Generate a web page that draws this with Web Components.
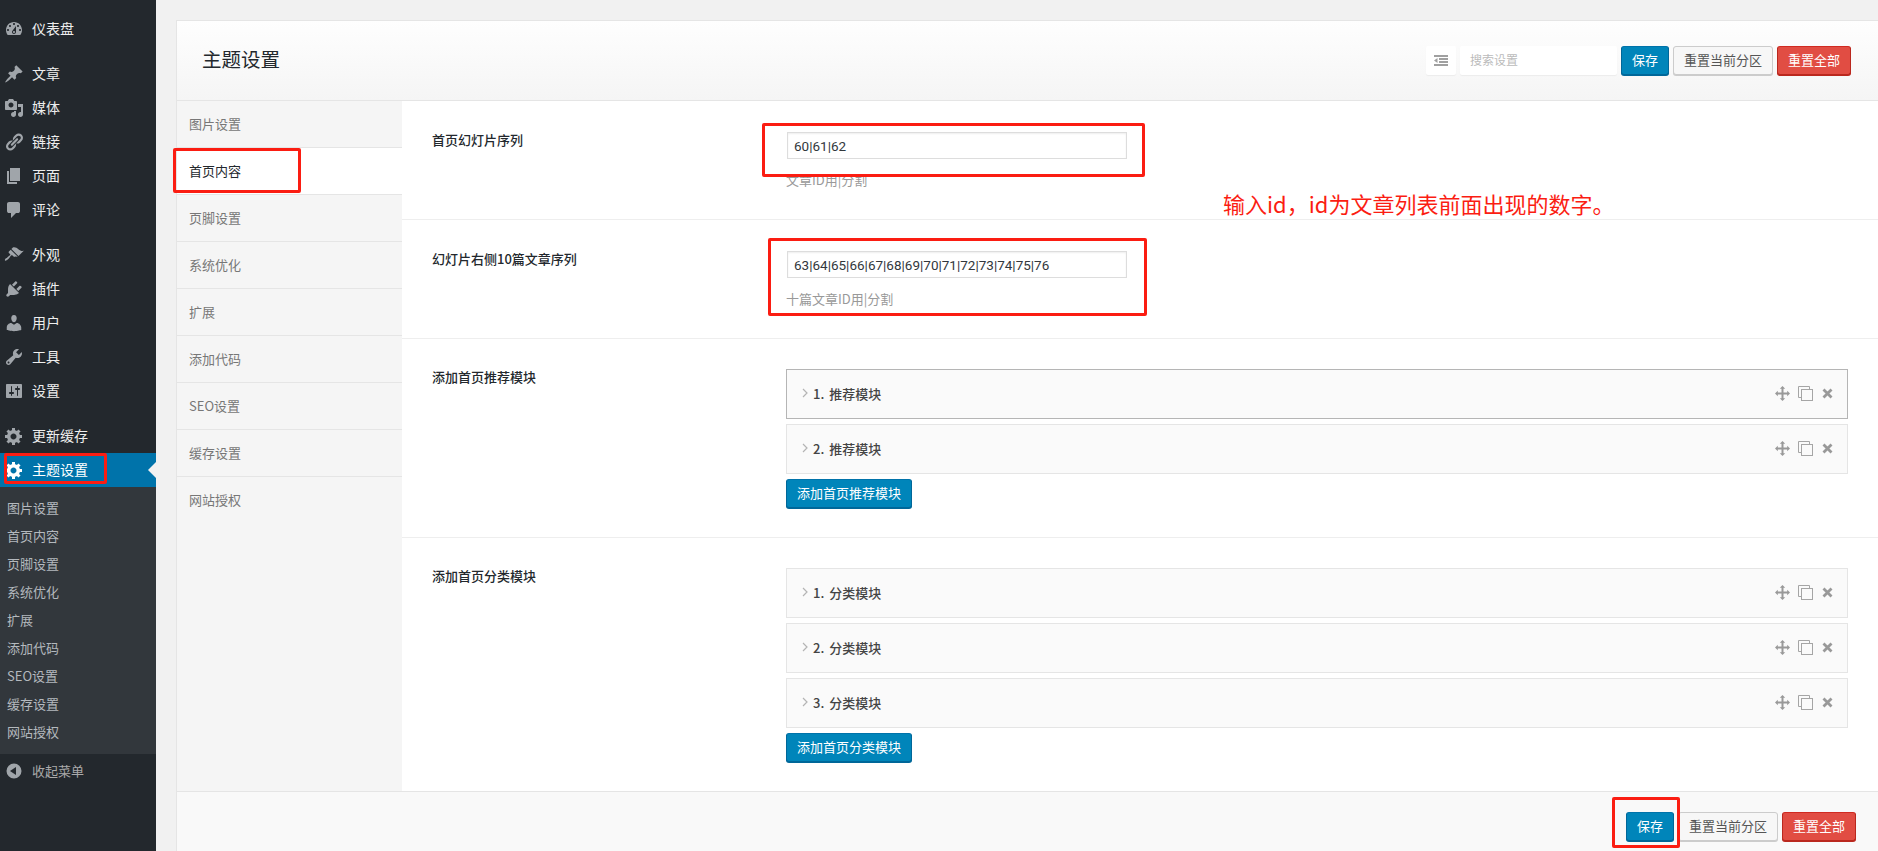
<!DOCTYPE html>
<html lang="zh-CN">
<head>
<meta charset="utf-8">
<title>主题设置</title>
<style>
  html, body { margin: 0; height: 851px; overflow: hidden; }
  body {
    position: relative;
    display: flex;
    background: #f1f1f1;
    font-family: "Noto Sans CJK SC", "Liberation Sans", sans-serif;
    font-size: 13px;
  }
</style>
</head>
<body>
  <wp-sidebar>
    <wp-menu-item icon="dashboard">仪表盘</wp-menu-item>
    <wp-menu-sep></wp-menu-sep>
    <wp-menu-item icon="pin">文章</wp-menu-item>
    <wp-menu-item icon="media">媒体</wp-menu-item>
    <wp-menu-item icon="links">链接</wp-menu-item>
    <wp-menu-item icon="page">页面</wp-menu-item>
    <wp-menu-item icon="comment">评论</wp-menu-item>
    <wp-menu-sep></wp-menu-sep>
    <wp-menu-item icon="brush">外观</wp-menu-item>
    <wp-menu-item icon="plugin">插件</wp-menu-item>
    <wp-menu-item icon="user">用户</wp-menu-item>
    <wp-menu-item icon="tools">工具</wp-menu-item>
    <wp-menu-item icon="sliders">设置</wp-menu-item>
    <wp-menu-sep></wp-menu-sep>
    <wp-menu-item icon="gear">更新缓存</wp-menu-item>
    <wp-menu-item icon="gear" current>主题设置</wp-menu-item>
    <wp-submenu>
      <span>图片设置</span><span>首页内容</span><span>页脚设置</span>
      <span>系统优化</span><span>扩展</span><span>添加代码</span>
      <span>SEO设置</span><span>缓存设置</span><span>网站授权</span>
    </wp-submenu>
    <wp-menu-item icon="collapse" dim>收起菜单</wp-menu-item>
  </wp-sidebar>

  <theme-panel>
    <panel-header slot="header" heading="主题设置"></panel-header>

    <panel-nav-item slot="nav">图片设置</panel-nav-item>
    <panel-nav-item slot="nav" active>首页内容</panel-nav-item>
    <panel-nav-item slot="nav">页脚设置</panel-nav-item>
    <panel-nav-item slot="nav">系统优化</panel-nav-item>
    <panel-nav-item slot="nav">扩展</panel-nav-item>
    <panel-nav-item slot="nav">添加代码</panel-nav-item>
    <panel-nav-item slot="nav">SEO设置</panel-nav-item>
    <panel-nav-item slot="nav">缓存设置</panel-nav-item>
    <panel-nav-item slot="nav" last>网站授权</panel-nav-item>

    <option-row label="首页幻灯片序列" style="--pad-bottom:32px">
      <text-field>60|61|62</text-field>
      <field-desc>文章ID用|分割</field-desc>
    </option-row>
    <option-row label="幻灯片右侧10篇文章序列" style="--pad-bottom:32px">
      <text-field>63|64|65|66|67|68|69|70|71|72|73|74|75|76</text-field>
      <field-desc>十篇文章ID用|分割</field-desc>
    </option-row>
    <option-row label="添加首页推荐模块" style="--pad-top:30px;--pad-bottom:29px">
      <repeater-row focused>1. 推荐模块</repeater-row>
      <repeater-row>2. 推荐模块</repeater-row>
      <ui-button kind="primary">添加首页推荐模块</ui-button>
    </option-row>
    <option-row label="添加首页分类模块" style="--pad-top:30px;--pad-bottom:0px" last>
      <repeater-row>1. 分类模块</repeater-row>
      <repeater-row>2. 分类模块</repeater-row>
      <repeater-row>3. 分类模块</repeater-row>
      <ui-button kind="primary">添加首页分类模块</ui-button>
    </option-row>

    <panel-footer slot="footer"></panel-footer>
  </theme-panel>

  <red-box x="4" y="453" w="103" h="31"></red-box>
  <red-box x="173" y="148" w="128" h="45"></red-box>
  <red-box x="762" y="123" w="383" h="54"></red-box>
  <red-box x="768" y="238" w="379" h="78"></red-box>
  <red-box x="1612" y="797" w="68" h="51"></red-box>
  <red-note x="1223" y="188">输入id，id为文章列表前面出现的数字。</red-note>

<script>
  const ICONS = {
    dashboard: 'M3.76 16h12.48c1.1-1.37 1.76-3.11 1.76-5 0-4.42-3.58-8-8-8s-8 3.58-8 8c0 1.89.66 3.63 1.76 5zM10 4c.55 0 1 .45 1 1s-.45 1-1 1-1-.45-1-1 .45-1 1-1zM6 6c.55 0 1 .45 1 1s-.45 1-1 1-1-.45-1-1 .45-1 1-1zm8 0c.55 0 1 .45 1 1s-.45 1-1 1-1-.45-1-1 .45-1 1-1zm-5.37 5.55L12 7v6c0 1.1-.9 2-2 2s-2-.9-2-2c0-.57.24-1.08.63-1.45zM4 10c.55 0 1 .45 1 1s-.45 1-1 1-1-.45-1-1 .45-1 1-1zm12 0c.55 0 1 .45 1 1s-.45 1-1 1-1-.45-1-1 .45-1 1-1zm-5 3c0-.55-.45-1-1-1s-1 .45-1 1 .45 1 1 1 1-.45 1-1z',
    pin: 'M10.44 3.02l1.82-1.82 6.36 6.35-1.83 1.82c-1.05-.68-2.48-.57-3.41.36l-.75.75c-.92.93-1.04 2.35-.35 3.41l-1.83 1.82-2.41-2.41-2.8 2.79c-.42.42-3.38 2.71-3.8 2.29s1.86-3.39 2.28-3.81l2.79-2.79L4.1 9.36l1.83-1.82c1.05.69 2.48.57 3.4-.36l.75-.75c.93-.92 1.05-2.35.36-3.41z',
    media: 'M13 11V4c0-.55-.45-1-1-1h-1.67L9 1H5L3.67 3H2c-.55 0-1 .45-1 1v7c0 .55.45 1 1 1h10c.55 0 1-.45 1-1zM7 4.5c1.38 0 2.5 1.12 2.5 2.5S8.38 9.5 7 9.5 4.5 8.38 4.5 7 5.62 4.5 7 4.5zM14 6h5v10.5c0 1.38-1.12 2.5-2.5 2.5S14 17.88 14 16.5s1.12-2.5 2.5-2.5c.17 0 .34.02.5.05V9h-3V6zm-4 8.05V13h2v3.5c0 1.38-1.12 2.5-2.5 2.5S7 17.88 7 16.5 8.12 14 9.5 14c.17 0 .34.02.5.05z',
    links: 'M17.74 2.76c1.68 1.69 1.68 4.41 0 6.1l-1.53 1.52c-1.12 1.12-2.7 1.47-4.14 1.09l2.62-2.61.76-.77.76-.76c.84-.84.84-2.2 0-3.04-.84-.85-2.2-.85-3.04 0l-.77.76-3.38 3.38c-.37-1.44-.02-3.02 1.1-4.14l1.52-1.53c1.69-1.68 4.42-1.68 6.1 0zM8.59 13.43l5.34-5.34c.42-.42.42-1.1 0-1.52-.44-.43-1.13-.39-1.53 0l-5.33 5.34c-.42.42-.42 1.1 0 1.52.44.43 1.13.39 1.52 0zm-.76 2.29l4.14-4.15c.38 1.44.03 3.02-1.09 4.14l-1.52 1.53c-1.69 1.68-4.41 1.68-6.1 0-1.68-1.68-1.68-4.42 0-6.1l1.53-1.52c1.12-1.12 2.7-1.47 4.14-1.1l-4.14 4.15c-.85.84-.85 2.2 0 3.05.84.84 2.2.84 3.04 0z',
    page: 'M6 15V2h10v13H6zm-1 1h8v2H3V5h2v11z',
    comment: 'M5 2h9q.82 0 1.41.59T16 4v7q0 .82-.59 1.41T14 13h-2l-5 5v-5H5q-.82 0-1.41-.59T3 11V4q0-.82.59-1.41T5 2z',
    brush: 'M14.48 11.06L7.41 3.99l1.5-1.5c.5-.56 2.3-.47 3.51.32 1.21.8 1.43 1.28 2.91 2.1 1.18.64 2.45 1.26 4.45.85zm-.71.71L6.7 4.7 4.93 6.47c-.39.39-.39 1.02 0 1.41l1.06 1.06c.39.39.39 1.03 0 1.42-.6.6-1.43 1.11-2.21 1.69-.35.26-.7.53-1.01.84C1.43 13.23.4 14.84 1.06 15.5c.65.65 2.26-.44 3.51-1.76.31-.31.58-.65.84-1.01.58-.77 1.09-1.6 1.69-2.2.39-.39 1.02-.39 1.41 0l1.06 1.05c.39.4 1.02.4 1.41 0z',
    plugin: 'M13.11 4.36L9.87 7.6 8 5.73l3.24-3.24c.35-.34 1.05-.2 1.56.32.52.51.66 1.21.31 1.55zm-8 1.77l.91-1.12 9.01 9.01-1.19.84c-.71.71-2.63 1.16-3.82 1.16H6.14L4.9 17.26c-.59.59-1.54.59-2.12 0-.59-.58-.59-1.53 0-2.12l1.24-1.24v-3.88c0-1.13.4-3.19 1.09-3.89zm7.26 3.97l3.24-3.24c.34-.35 1.04-.21 1.55.31.52.51.66 1.21.31 1.55l-3.24 3.25z',
    user: 'M10 9.25c-2.27 0-2.73-3.44-2.73-3.44C7 4.02 7.82 2 9.97 2c2.16 0 2.98 2.02 2.71 3.81 0 0-.41 3.44-2.68 3.44zm0 2.57L12.72 10c2.39 0 4.52 2.33 4.52 4.53v2.49s-3.65 1.13-7.24 1.13c-3.65 0-7.24-1.13-7.24-1.13v-2.49c0-2.25 1.94-4.48 4.47-4.48z',
    tools: 'M16.68 9.77c-1.34 1.34-3.3 1.67-4.95.99l-5.41 6.52c-.99.99-2.59.99-3.58 0s-.99-2.59 0-3.57l6.52-5.42c-.68-1.65-.35-3.61.99-4.95 1.28-1.28 3.12-1.62 4.72-1.06l-2.89 2.89 2.82 2.82 2.86-2.87c.53 1.58.18 3.39-1.08 4.65zM3.81 16.21c.4.39 1.04.39 1.43 0 .4-.4.4-1.04 0-1.43-.39-.4-1.03-.4-1.43 0-.39.39-.39 1.03 0 1.43z',
    sliders: 'M18 16V4c0-.55-.45-1-1-1H3c-.55 0-1 .45-1 1v12c0 .55.45 1 1 1h14c.55 0 1-.45 1-1zM8 11h1c.55 0 1 .45 1 1s-.45 1-1 1H8v1.5c0 .28-.22.5-.5.5s-.5-.22-.5-.5V13H6c-.55 0-1-.45-1-1s.45-1 1-1h1V5.5c0-.28.22-.5.5-.5s.5.22.5.5V11zm5-2h-1c-.55 0-1-.45-1-1s.45-1 1-1h1V5.5c0-.28.22-.5.5-.5s.5.22.5.5V7h1c.55 0 1 .45 1 1s-.45 1-1 1h-1v5.5c0 .28-.22.5-.5.5s-.5-.22-.5-.5V9z',
    gear: 'M18 12h-2.18c-.17.7-.44 1.35-.81 1.93l1.54 1.54-2.1 2.1-1.54-1.54c-.58.36-1.23.63-1.91.79V19H8v-2.18c-.68-.16-1.33-.43-1.91-.79l-1.54 1.54-2.12-2.12 1.54-1.54c-.36-.58-.63-1.23-.79-1.91H1V9.03h2.17c.16-.7.44-1.35.8-1.94L2.43 5.55l2.1-2.1 1.54 1.54c.58-.37 1.24-.64 1.93-.81V2h3v2.18c.68.16 1.33.43 1.91.79l1.54-1.54 2.12 2.12-1.54 1.54c.36.59.64 1.24.8 1.94H18V12zm-8.5 1.5c1.66 0 3-1.34 3-3s-1.34-3-3-3-3 1.34-3 3 1.34 3 3 3z',
    collapse: 'M10 2.5a7.5 7.5 0 1 0 0 15 7.5 7.5 0 0 0 0-15zm2 11.5-6-4 6-4z'
  };

  class WpSidebar extends HTMLElement {
    constructor() {
      super();
      this.attachShadow({ mode: 'open' });
      this.shadowRoot.innerHTML = `
        <style>
          :host {
            display: flex;
            flex-direction: column;
            flex: 0 0 156px;
            box-sizing: border-box;
            height: 851px;
            padding-top: 12px;
            background: #23282d;
          }
        </style>
        <slot></slot>
      `;
    }
  }

  class WpMenuItem extends HTMLElement {
    constructor() {
      super();
      this.attachShadow({ mode: 'open' });
    }

    connectedCallback() {
      const path = ICONS[this.getAttribute('icon')] || '';
      this.shadowRoot.innerHTML = `
        <style>
          :host {
            position: relative;
            display: flex;
            align-items: center;
            height: 34px;
            padding-left: 4px;
            gap: 8px;
            color: #eee;
            font-size: 14px;
          }
          :host([dim]) { color: #aaa; font-size: 13px; }
          :host([current]) { background: #0073aa; color: #fff; }
          svg { width: 20px; height: 20px; fill: #a0a5aa; flex: none; }
          :host([current]) svg { fill: #fff; }
          .label { margin-bottom: 2px; }
          :host([current])::after {
            content: '';
            position: absolute;
            right: 0;
            top: 9px;
            border: 8px solid transparent;
            border-right-color: #f1f1f1;
            border-left-width: 0;
          }
        </style>
        <svg viewBox="0 0 20 20"><path d="${path}"/></svg>
        <span class="label"><slot></slot></span>
      `;
    }
  }

  class WpMenuSep extends HTMLElement {
    constructor() {
      super();
      this.attachShadow({ mode: 'open' });
      this.shadowRoot.innerHTML = '<style>:host { display: block; height: 11px; }</style>';
    }
  }

  class WpSubmenu extends HTMLElement {
    constructor() {
      super();
      this.attachShadow({ mode: 'open' });
      this.shadowRoot.innerHTML = `
        <style>
          :host {
            display: block;
            padding: 6px 0 9px 7px;
            background: #32373c;
            color: #b4b9be;
            font-size: 13px;
          }
          .rows { display: grid; grid-auto-rows: 28px; align-items: center; }
        </style>
        <div class="rows"><slot></slot></div>
      `;
    }
  }

  class ThemePanel extends HTMLElement {
    constructor() {
      super();
      this.attachShadow({ mode: 'open' });
      this.shadowRoot.innerHTML = `
        <style>
          :host {
            display: flex;
            flex-direction: column;
            flex: 1;
            box-sizing: border-box;
            height: 831px;
            margin: 20px 0 0 20px;
            border-top: 1px solid #e5e5e5;
            border-left: 1px solid #e5e5e5;
            background: #fff;
            min-width: 0;
          }
          .body { display: flex; flex: 1; min-height: 0; }
          .nav {
            display: flex;
            flex-direction: column;
            flex: 0 0 225px;
            background: #f5f5f5;
          }
          .content { flex: 1; min-width: 0; background: #fff; }
        </style>
        <slot name="header"></slot>
        <div class="body">
          <div class="nav"><slot name="nav"></slot></div>
          <div class="content"><slot></slot></div>
        </div>
        <slot name="footer"></slot>
      `;
    }
  }

  class PanelHeader extends HTMLElement {
    constructor() {
      super();
      this.attachShadow({ mode: 'open' });
    }

    connectedCallback() {
      this.shadowRoot.innerHTML = `
        <style>
          :host {
            display: flex;
            align-items: center;
            box-sizing: border-box;
            height: 80px;
            padding: 0 27px 0 25px;
            border-bottom: 1px solid #e5e5e5;
            background: linear-gradient(#fefefe, #f5f5f5);
          }
          h1 {
            flex: 1;
            margin: 0 0 4px;
            color: #23282d;
            font-size: 19.5px;
            font-weight: 400;
          }
          .tools { display: flex; gap: 4px; }
          .expand, .search {
            display: flex;
            align-items: center;
            box-sizing: border-box;
            height: 29px;
            background: #fff;
            border-radius: 2px;
            box-shadow: 0 1px 1px rgba(0, 0, 0, .05);
          }
          .expand { width: 30px; justify-content: center; }
          .expand svg { width: 14px; height: 11px; fill: #a0a0a0; }
          .search { width: 157px; padding: 0 0 2px 10px; color: #bbb; font-size: 12px; }
        </style>
        <h1>${this.getAttribute('heading')}</h1>
        <div class="tools">
          <div class="expand">
            <svg viewBox="0 0 14 11"><path d="M0 0h14v2H0zM5 3h9v2H5zM5 6h9v2H5zM0 9h14v2H0zM0 5.500 3.500 3v5z"/></svg>
          </div>
          <div class="search">搜索设置</div>
          <ui-button kind="primary">保存</ui-button>
          <ui-button>重置当前分区</ui-button>
          <ui-button kind="danger">重置全部</ui-button>
        </div>
      `;
    }
  }

  class PanelNavItem extends HTMLElement {
    constructor() {
      super();
      this.attachShadow({ mode: 'open' });
      this.shadowRoot.innerHTML = `
        <style>
          :host {
            display: flex;
            align-items: center;
            box-sizing: border-box;
            height: 47px;
            padding: 0 0 2px 12px;
            border-bottom: 1px solid #e5e5e5;
            color: #777;
            font-size: 13px;
          }
          :host([active]) { background: #fff; color: #23282d; }
          :host([last]) { border-bottom: 0; }
        </style>
        <slot></slot>
      `;
    }
  }

  class OptionRow extends HTMLElement {
    constructor() {
      super();
      this.attachShadow({ mode: 'open' });
    }

    connectedCallback() {
      this.shadowRoot.innerHTML = `
        <style>
          :host {
            display: grid;
            grid-template-columns: 354px 1fr;
            padding: var(--pad-top, 31px) 30px var(--pad-bottom, 28px);
            border-bottom: 1px solid #eee;
          }
          :host([last]) { border-bottom: 0; }
          .label { color: #23282d; font-size: 13px; font-weight: 500; line-height: 15px; }
          .control { display: flex; flex-direction: column; align-items: flex-start; min-width: 0; }
        </style>
        <div class="label">${this.getAttribute('label')}</div>
        <div class="control"><slot></slot></div>
      `;
    }
  }

  class TextField extends HTMLElement {
    constructor() {
      super();
      this.attachShadow({ mode: 'open' });
      this.shadowRoot.innerHTML = `
        <style>
          :host {
            display: flex;
            align-items: center;
            box-sizing: border-box;
            width: 340px;
            height: 27px;
            margin-left: 1px;
            padding-left: 6px;
            border: 1px solid #ddd;
            box-shadow: inset 0 1px 2px rgba(0, 0, 0, .07);
            color: #32373c;
            font-family: Roboto, "Liberation Sans", sans-serif;
            font-size: 13.5px;
          }
        </style>
        <slot></slot>
      `;
    }
  }

  class FieldDesc extends HTMLElement {
    constructor() {
      super();
      this.attachShadow({ mode: 'open' });
      this.shadowRoot.innerHTML = `
        <style>
          :host {
            display: block;
            margin-top: 14px;
            color: #999;
            font-size: 13px;
            line-height: 14px;
          }
        </style>
        <slot></slot>
      `;
    }
  }

  class RepeaterRow extends HTMLElement {
    constructor() {
      super();
      this.attachShadow({ mode: 'open' });
      this.shadowRoot.innerHTML = `
        <style>
          :host {
            display: flex;
            align-items: center;
            box-sizing: border-box;
            width: 100%;
            height: 50px;
            margin-bottom: 5px;
            padding: 0 14px 2px 15px;
            border: 1px solid #e5e5e5;
            background: #fafafa;
            color: #444;
            font-size: 13px;
            font-weight: 500;
          }
          :host([focused]) { border-color: #b5b5b5; }
          .chev { width: 6px; height: 10px; margin: -1px 5px 0 0; fill: none; stroke: #b4b4b4; stroke-width: 1.2; }
          .title { flex: 1; word-spacing: 2px; }
          .acts { display: flex; align-items: center; }
          .move { width: 15px; height: 15px; fill: #999; }
          .copy { width: 15px; height: 15px; margin-left: 8px; fill: #fafafa; stroke: #a5a5a5; stroke-width: 1; }
          .del { width: 11px; height: 11px; margin-left: 9px; stroke: #999; stroke-width: 2.800; }
        </style>
        <svg class="chev" viewBox="0 0 6 10"><path d="M1 1l4 4-4 4"/></svg>
        <span class="title"><slot></slot></span>
        <span class="acts">
          <svg class="move" viewBox="0 0 15 15"><path d="M7.500 0l2.700 2.800H8.500v3.700h3.700V4.800L15 7.500l-2.800 2.700V8.500H8.500v3.700h1.700L7.500 15l-2.700-2.800h1.700V8.500H2.800v1.700L0 7.500l2.800-2.700v1.700h3.700V2.800H4.800z"/></svg>
          <svg class="copy" viewBox="0 0 15 15"><path d="M3.500 11.500h-3v-11h11v3"/><rect x="3.500" y="3.500" width="11" height="11"/></svg>
          <svg class="del" viewBox="0 0 11 11"><path d="M1.500 1.500l8 8M9.500 1.500l-8 8"/></svg>
        </span>
      `;
    }
  }

  class UiButton extends HTMLElement {
    constructor() {
      super();
      this.attachShadow({ mode: 'open' });
      this.shadowRoot.innerHTML = `
        <style>
          :host {
            display: inline-flex;
            align-items: center;
            box-sizing: border-box;
            height: 29px;
            padding: 0 10px 2px;
            border: 1px solid #ccc;
            border-radius: 3px;
            background: #f7f7f7;
            box-shadow: 0 1px 0 #ccc;
            color: #555;
            font-size: 13px;
            white-space: nowrap;
          }
          :host([kind=primary]) {
            background: #0085ba;
            border-color: #0073aa #006799 #006799;
            box-shadow: 0 1px 0 #006799;
            color: #fff;
          }
          :host([kind=danger]) {
            background: #e14d43;
            border-color: #d02a21 #ba281e #ba281e;
            box-shadow: 0 1px 0 #ba281e;
            color: #fff;
          }
        </style>
        <slot></slot>
      `;
    }
  }

  class PanelFooter extends HTMLElement {
    constructor() {
      super();
      this.attachShadow({ mode: 'open' });
      this.shadowRoot.innerHTML = `
        <style>
          :host {
            display: flex;
            justify-content: flex-end;
            gap: 4px;
            box-sizing: border-box;
            height: 60px;
            padding: 20px 22px 0 0;
            border-top: 1px solid #e5e5e5;
            background: #f9f9f9;
          }
        </style>
        <ui-button kind="primary">保存</ui-button>
        <ui-button>重置当前分区</ui-button>
        <ui-button kind="danger">重置全部</ui-button>
      `;
    }
  }

  // hand-drawn annotations sitting on top of the screenshot
  class RedBox extends HTMLElement {
    constructor() {
      super();
      this.attachShadow({ mode: 'open' });
    }

    connectedCallback() {
      const [x, y, w, h] = ['x', 'y', 'w', 'h'].map((a) => this.getAttribute(a));
      this.shadowRoot.innerHTML = `
        <style>
          :host {
            position: absolute;
            left: ${x}px;
            top: ${y}px;
            width: ${w}px;
            height: ${h}px;
            box-sizing: border-box;
            border: 3px solid #fb1d12;
            border-radius: 2px;
          }
        </style>
      `;
    }
  }

  class RedNote extends HTMLElement {
    constructor() {
      super();
      this.attachShadow({ mode: 'open' });
    }

    connectedCallback() {
      this.shadowRoot.innerHTML = `
        <style>
          :host {
            position: absolute;
            left: ${this.getAttribute('x')}px;
            top: ${this.getAttribute('y')}px;
            color: #fb1d12;
            font-size: 22px;
            line-height: 30px;
            white-space: nowrap;
          }
        </style>
        <slot></slot>
      `;
    }
  }

  customElements.define('wp-sidebar', WpSidebar);
  customElements.define('wp-menu-item', WpMenuItem);
  customElements.define('wp-menu-sep', WpMenuSep);
  customElements.define('wp-submenu', WpSubmenu);
  customElements.define('theme-panel', ThemePanel);
  customElements.define('panel-header', PanelHeader);
  customElements.define('panel-nav-item', PanelNavItem);
  customElements.define('option-row', OptionRow);
  customElements.define('text-field', TextField);
  customElements.define('field-desc', FieldDesc);
  customElements.define('repeater-row', RepeaterRow);
  customElements.define('ui-button', UiButton);
  customElements.define('panel-footer', PanelFooter);
  customElements.define('red-box', RedBox);
  customElements.define('red-note', RedNote);
</script>
</body>
</html>
